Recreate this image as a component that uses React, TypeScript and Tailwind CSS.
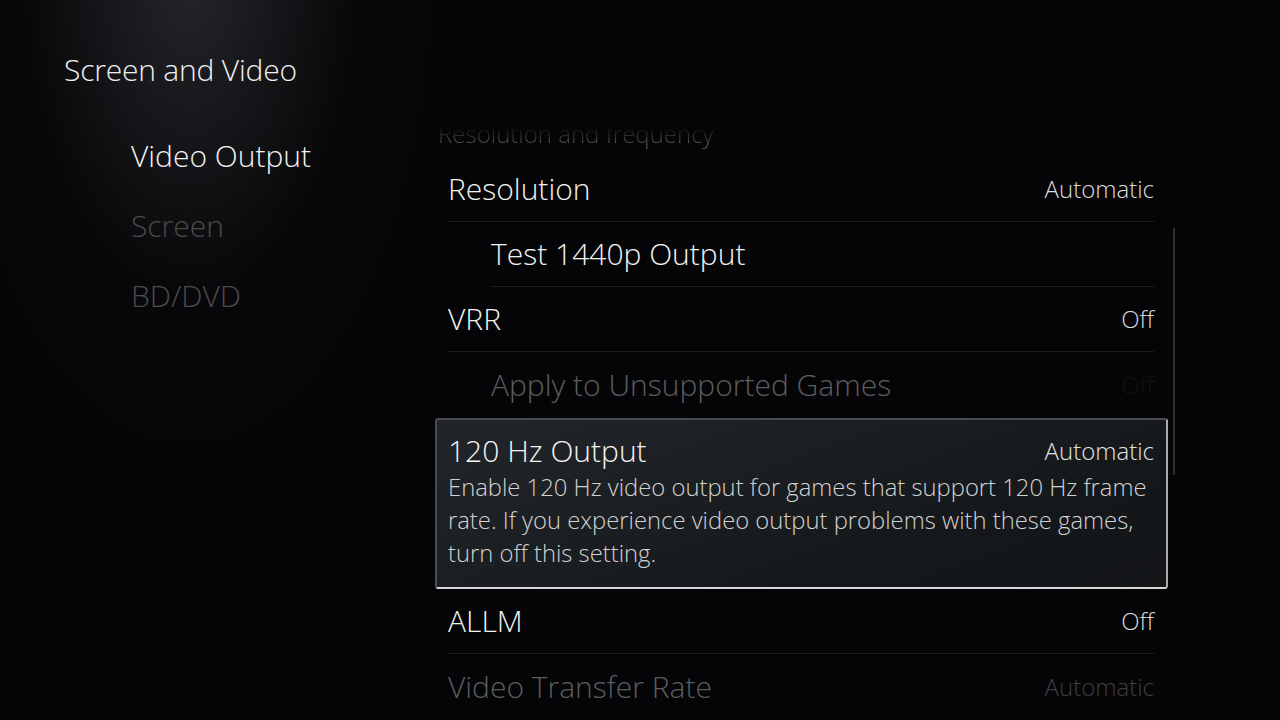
import React from "react";

type Row = {
  title: string;
  value?: string;
  indent?: boolean;
  dim?: boolean;
  valueClass?: string;
  divider?: boolean;
};

function SettingRow({ title, value, indent, dim, valueClass, divider = true }: Row) {
  return (
    <div className="px-[14px] pl-[13px]">
      <div
        className={`h-[65px] flex items-center justify-between ${indent ? "ml-[43px]" : ""} ${
          divider ? "border-b border-[#1c1d1f]" : ""
        }`}
      >
        <span className={`text-[30px] leading-none ${dim ? "text-[#5c5d5f]" : "text-[#f2f2f2]"}`}>{title}</span>
        {value && (
          <span className={`text-[24px] leading-none ${valueClass ?? "text-[#dcdcdc]"}`}>{value}</span>
        )}
      </div>
    </div>
  );
}

export default function App() {
  return (
    <div
      className="relative w-[1280px] h-[720px] overflow-hidden bg-[#050507] font-light flex"
      style={{ fontFamily: '"Open Sans", "Noto Sans", sans-serif' }}
    >
      <div className="absolute inset-0 pointer-events-none bg-[radial-gradient(ellipse_280px_560px_at_190px_-40px,rgba(70,72,78,0.5),rgba(20,20,24,0.18)_60%,transparent_100%)]" />

      {/* Left column */}
      <div className="relative w-[435px] shrink-0 pt-[49px] pl-[64px]">
        <div className="h-[40px] flex items-center text-[30px] text-[#f0f0f0] tracking-[-0.2px]">Screen and Video</div>
        <div className="mt-[31px] pl-[67px] flex flex-col">
          <div className="h-[70px] flex items-center text-[30px] text-[#f2f2f2]">Video Output</div>
          <div className="h-[70px] flex items-center text-[30px] text-[#4a4b4d]">Screen</div>
          <div className="h-[70px] flex items-center text-[30px] text-[#4a4b4d]">BD/DVD</div>
        </div>
      </div>

      {/* Right column */}
      <div className="relative w-[733px] shrink-0 mt-[118px] overflow-hidden">
        <div className="mt-[-8px] h-[47px] flex items-center pl-[3px] text-[24px] text-[#55565a] [mask-image:linear-gradient(to_bottom,transparent_35%,black_75%)]">
          Resolution and frequency
        </div>
        <SettingRow title="Resolution" value="Automatic" />
        <SettingRow title="Test 1440p Output" indent />
        <SettingRow title="VRR" value="Off" />
        <SettingRow title="Apply to Unsupported Games" value="Off" indent dim valueClass="text-[#111214]" divider={false} />

        <div className="mt-[1px] h-[171px] rounded-[3px] border-2 border-t-[#4a4c50] border-l-[#4a4c50] border-r-[#a9aaad] border-b-[#d6d6d8] bg-[linear-gradient(160deg,#22262a,#15181b_70%,#131517)] pl-[11px] pr-[12px] pt-[13px]">
          <div className="h-[35px] flex items-center justify-between">
            <span className="text-[30px] leading-none text-[#f4f4f4]">120 Hz Output</span>
            <span className="text-[24px] leading-none text-[#e2e2e2]">Automatic</span>
          </div>
          <p className="mt-[3px] text-[23.8px] leading-[33px] text-[#d2d2d2] pr-[6px]">
            Enable 120 Hz video output for games that support 120 Hz frame rate. If you experience video output problems with these games, turn off this setting.
          </p>
        </div>

        <SettingRow title="ALLM" value="Off" />
        <SettingRow title="Video Transfer Rate" value="Automatic" dim valueClass="text-[#3e3f41]" divider={false} />
      </div>

      {/* Scrollbar */}
      <div className="absolute left-[1173px] top-[228px] w-[2px] h-[247px] bg-[#2e2f31]" />
    </div>
  );
}
